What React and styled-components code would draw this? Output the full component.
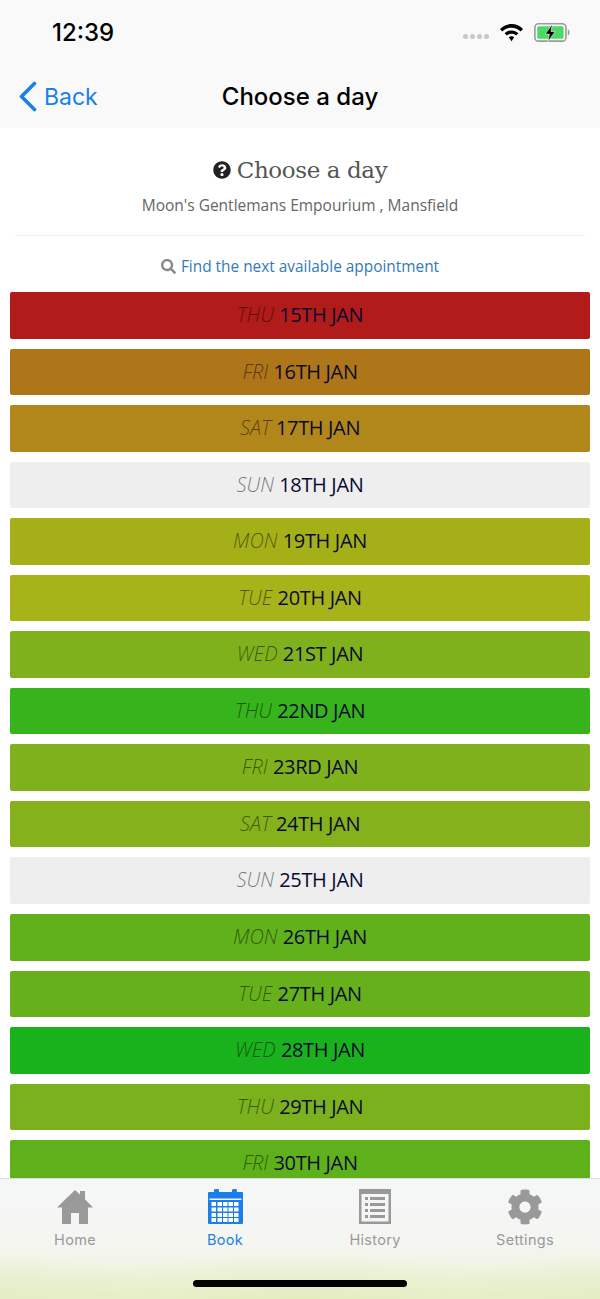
import React from "react";
import styled, { createGlobalStyle } from "styled-components";
import { FaQuestionCircle, FaSearch, FaCog } from "react-icons/fa";

const days = [
    { day: "THU", date: "15TH JAN", color: "#b11c1a" },
    { day: "FRI", date: "16TH JAN", color: "#ae7619" },
    { day: "SAT", date: "17TH JAN", color: "#b1861a" },
    { day: "SUN", date: "18TH JAN", color: "#eeeeee" },
    { day: "MON", date: "19TH JAN", color: "#a5b019" },
    { day: "TUE", date: "20TH JAN", color: "#a6b319" },
    { day: "WED", date: "21ST JAN", color: "#7fb11c" },
    { day: "THU", date: "22ND JAN", color: "#37b31b" },
    { day: "FRI", date: "23RD JAN", color: "#7fb11c" },
    { day: "SAT", date: "24TH JAN", color: "#84b11c" },
    { day: "SUN", date: "25TH JAN", color: "#eeeeee" },
    { day: "MON", date: "26TH JAN", color: "#60b11b" },
    { day: "TUE", date: "27TH JAN", color: "#66b11b" },
    { day: "WED", date: "28TH JAN", color: "#1ab21c" },
    { day: "THU", date: "29TH JAN", color: "#7ab11c" },
    { day: "FRI", date: "30TH JAN", color: "#5fb11b" },
];

const HomeIcon = () => (
    <svg width="36" height="34" viewBox="0 0 36 34">
        <path fill="currentColor" d="M18 0 L23 4.5 V1 H28 V9.2 L36 17.5 H31 V34 H22 V23 H14 V34 H5 V17.5 H0 Z" />
    </svg>
);

const CalendarIcon = () => (
    <svg width="35" height="35" viewBox="0 0 35 35">
        <path fill="currentColor" fillRule="evenodd" d="M1 3 H6 V2 a2.5 2.5 0 0 1 5 0 V3 H24 V2 a2.5 2.5 0 0 1 5 0 V3 H34 a1 1 0 0 1 1 1 V34 a1 1 0 0 1 -1 1 H1 a1 1 0 0 1 -1 -1 V4 a1 1 0 0 1 1 -1 Z M1.5 9.5 V11 H33.5 V9.5 Z" />
        {[14, 19.5, 25, 30].map((y) =>
            [3.5, 9.5, 15, 20.5, 26].map((x) => (
                <rect key={`${x}-${y}`} x={x} y={y - 1} width="4.5" height="4" fill="#fff" />
            ))
        )}
    </svg>
);

const ListIcon = () => (
    <svg width="32" height="35" viewBox="0 0 32 35">
        <path fill="currentColor" fillRule="evenodd" d="M0 0 H32 V35 H0 Z M2.5 5 V32.5 H29.5 V5 Z" />
        {[8, 14, 20, 26].map((y) => (
            <g key={y} fill="currentColor">
                <rect x="6" y={y} width="3" height="3" />
                <rect x="11" y={y} width="15" height="3" />
            </g>
        ))}
    </svg>
);

const WifiIcon = () => (
    <svg width="23" height="18" viewBox="0 0 22 17">
        <path fill="#000" d="M11 0 C15.5 0 19 1.8 22 4.6 L19.8 7 C17.4 4.8 14.5 3.4 11 3.4 C7.5 3.4 4.6 4.8 2.2 7 L0 4.6 C3 1.8 6.5 0 11 0 Z" />
        <path fill="#000" d="M11 6 C13.6 6 15.8 7 17.6 8.7 L15.4 11 C14.2 9.9 12.8 9.3 11 9.3 C9.2 9.3 7.8 9.9 6.6 11 L4.4 8.7 C6.2 7 8.4 6 11 6 Z" />
        <path fill="#000" d="M11 11.5 C12 11.5 12.9 11.9 13.6 12.5 L11 16.5 L8.4 12.5 C9.1 11.9 10 11.5 11 11.5 Z" />
    </svg>
);

const BatteryIcon = () => (
    <svg width="36" height="20" viewBox="0 0 34 19">
        <rect x="0.75" y="0.75" width="29.5" height="16.5" rx="3.5" fill="none" stroke="#9a9a9a" strokeWidth="1.5" />
        <path fill="#9a9a9a" d="M32 6 c1 .4 1.6 1.5 1.6 3 s-.6 2.6 -1.6 3 Z" />
        <rect x="3" y="3" width="25" height="12" rx="1.5" fill="#4cd964" />
        <path fill="#000" stroke="#f9f9f9" strokeWidth="0.6" d="M17.5 1 L10.5 10.5 H14.5 L13 18 L20 8 H16 Z" />
    </svg>
);

const App = () => {
    return (
        <Screen>
            <GlobalStyle />
            <TopBars>
                <StatusBar>
                    <Clock>12:39</Clock>
                    <StatusIcons>
                        <Signal>
                            <i /><i /><i /><i />
                        </Signal>
                        <WifiIcon />
                        <BatteryIcon />
                    </StatusIcons>
                </StatusBar>
                <NavBar>
                    <BackLink>
                        <svg width="20" height="31" viewBox="0 0 20 31">
                            <path d="M16.5 2.5 L3.5 15.5 L16.5 28.5" fill="none" stroke="currentColor" strokeWidth="3.6" strokeLinecap="round" strokeLinejoin="round" />
                        </svg>
                        Back
                    </BackLink>
                    <NavTitle>Choose a day</NavTitle>
                </NavBar>
            </TopBars>
            <Content>
                <Heading>
                    <FaQuestionCircle />
                    Choose a day
                </Heading>
                <Shop>Moon's Gentlemans Empourium , Mansfield</Shop>
                <Rule />
                <FindLink>
                    <FaSearch />
                    Find the next available appointment
                </FindLink>
                <DayList>
                    {days.map((d) => (
                        <DayRow key={d.date} $color={d.color}>
                            <em>{d.day}</em> <span>{d.date}</span>
                        </DayRow>
                    ))}
                </DayList>
            </Content>
            <TabBar>
                <Tabs>
                    <Tab>
                        <IconSlot><HomeIcon /></IconSlot>
                        Home
                    </Tab>
                    <Tab $active>
                        <IconSlot><CalendarIcon /></IconSlot>
                        Book
                    </Tab>
                    <Tab>
                        <IconSlot><ListIcon /></IconSlot>
                        History
                    </Tab>
                    <Tab>
                        <IconSlot><FaCog size={36} /></IconSlot>
                        Settings
                    </Tab>
                </Tabs>
                <HomeIndicator />
            </TabBar>
        </Screen>
    );
};

const GlobalStyle = createGlobalStyle`
    html, body{
        margin: 0;
        padding: 0;
        background: #fff;
    }
    *{
        box-sizing: border-box;
    }
`;

const Screen = styled.div`
    width: 600px;
    height: 1299px;
    display: flex;
    flex-direction: column;
    overflow: hidden;
    background: #fff;
    font-family: "Open Sans", sans-serif;
`;

const TopBars = styled.header`
    height: 128px;
    flex: none;
    background: #f9f9f9;
`;

const StatusBar = styled.div`
    height: 65px;
    padding: 0 30px 0 52px;
    display: flex;
    align-items: center;
    justify-content: space-between;
`;

const Clock = styled.span`
    font-family: Inter, sans-serif;
    font-size: 24px;
    font-weight: 500;
    color: #000;
`;

const StatusIcons = styled.div`
    display: flex;
    align-items: center;
    gap: 11px;
`;

const Signal = styled.div`
    display: flex;
    gap: 2px;
    margin-top: 7px;
    i{
        width: 5px;
        height: 5px;
        border-radius: 50%;
        background: #c8c8c8;
    }
`;

const NavBar = styled.nav`
    height: 63px;
    padding: 0 0 0 18px;
    display: flex;
    align-items: center;
    position: relative;
`;

const BackLink = styled.a`
    display: flex;
    align-items: center;
    gap: 6px;
    font-family: Inter, sans-serif;
    font-size: 23px;
    color: #1a7fe8;
`;

const NavTitle = styled.h1`
    position: absolute;
    left: 0;
    right: 0;
    margin: 0;
    text-align: center;
    font-family: Inter, sans-serif;
    font-size: 24px;
    font-weight: 500;
    color: #000;
`;

const Content = styled.main`
    flex: 1;
    min-height: 0;
    overflow: hidden;
    padding: 0 10px;
    text-align: center;
`;

const Heading = styled.h2`
    margin: 24px 0 0;
    height: 35px;
    display: flex;
    align-items: center;
    justify-content: center;
    gap: 6px;
    font-family: "DejaVu Serif", serif;
    font-size: 23px;
    font-weight: 400;
    letter-spacing: -0.4px;
    color: #555;
    svg{
        color: #222;
        font-size: 18px;
    }
`;

const Shop = styled.p`
    margin: 6px 0 0;
    height: 24px;
    line-height: 24px;
    font-size: 15.5px;
    color: #666;
`;

const Rule = styled.hr`
    margin: 18px 5px 0;
    border: 0;
    border-top: 1px solid #eee;
`;

const FindLink = styled.a`
    margin-top: 18px;
    height: 24px;
    display: flex;
    align-items: center;
    justify-content: center;
    gap: 5px;
    font-size: 15.4px;
    color: #337ab7;
    svg{
        color: #888;
        font-size: 15px;
    }
`;

const DayList = styled.div`
    margin-top: 14px;
    display: flex;
    flex-direction: column;
    gap: 10px;
`;

const DayRow = styled.div`
    height: 46.55px;
    flex: none;
    display: block;
    line-height: 46.55px;
    border-radius: 2px;
    text-align: center;
    font-size: 20px;
    color: #0a0a30;
    background: ${(p) => p.$color};
    em{
        color: rgba(0, 0, 0, 0.5);
        font-style: italic;
        font-weight: 300;
    }
    span{
        letter-spacing: -0.35px;
    }
`;

const TabBar = styled.footer`
    height: 121px;
    flex: none;
    border-top: 1px solid #dcdcdc;
    background:
        radial-gradient(ellipse 50% 40% at 50% 105%, #e2edbb 0%, rgba(226, 237, 187, 0) 100%),
        radial-gradient(ellipse 30% 35% at 100% 100%, #e4edc4 0%, rgba(228, 237, 196, 0) 100%),
        radial-gradient(ellipse 30% 35% at 0% 100%, #e4edc4 0%, rgba(228, 237, 196, 0) 100%),
        linear-gradient(#f5f6f8 0%, #f5f6f2 50%, #eaf1d4 100%);
`;

const Tabs = styled.div`
    display: grid;
    grid-template-columns: repeat(4, 150px);
    padding-top: 10px;
`;

const Tab = styled.a`
    display: flex;
    flex-direction: column;
    align-items: center;
    font-family: Inter, sans-serif;
    font-size: 14.5px;
    font-weight: 400;
    letter-spacing: 0.3px;
    line-height: 18px;
    color: ${(p) => (p.$active ? "#1a7fe8" : "#999")};
`;

const IconSlot = styled.span`
    height: 35px;
    margin-bottom: 7px;
    display: flex;
    align-items: center;
`;

const HomeIndicator = styled.div`
    width: 214px;
    height: 7px;
    margin: 31px auto 0;
    border-radius: 4px;
    background: #000;
`;

export default App;
